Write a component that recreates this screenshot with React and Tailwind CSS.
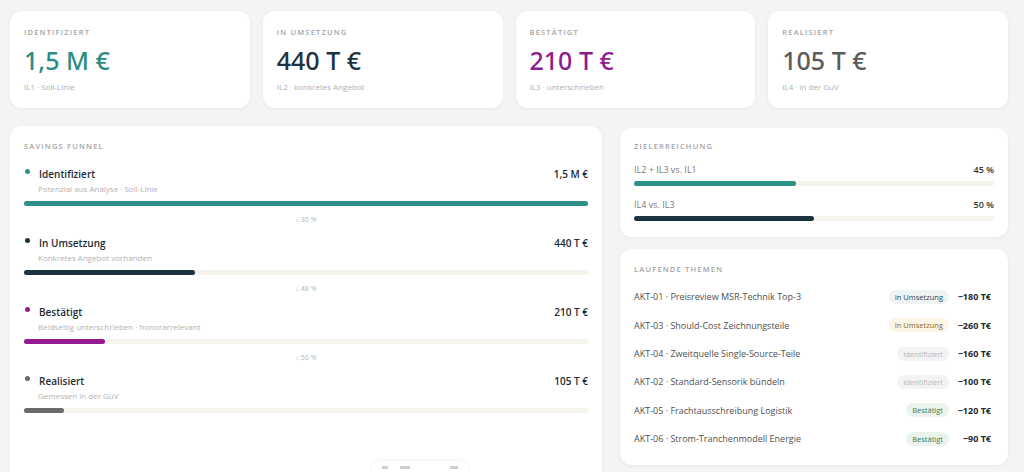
import React from "react";

const kpis = [
  { label: "IDENTIFIZIERT", value: "1,5 M €", sub: "IL1 · Soll-Linie", color: "text-[#2b8c83]" },
  { label: "IN UMSETZUNG", value: "440 T €", sub: "IL2 · konkretes Angebot", color: "text-[#1c3440]" },
  { label: "BESTÄTIGT", value: "210 T €", sub: "IL3 · unterschrieben", color: "text-[#8f1b8f]" },
  { label: "REALISIERT", value: "105 T €", sub: "IL4 · in der GuV", color: "text-[#5b5b5b]" },
];

const stages = [
  { title: "Identifiziert", sub: "Potenzial aus Analyse · Soll-Linie", value: "1,5 M €", dot: "bg-[#2e9188]", bar: "bg-[#2e9188]", pct: 100, drop: "↓ 30 %" },
  { title: "In Umsetzung", sub: "Konkretes Angebot vorhanden", value: "440 T €", dot: "bg-[#1c3440]", bar: "bg-[#1c3440]", pct: 30.3, drop: "↓ 48 %" },
  { title: "Bestätigt", sub: "Beidseitig unterschrieben · honorarrelevant", value: "210 T €", dot: "bg-[#931a93]", bar: "bg-[#931a93]", pct: 14.4, drop: "↓ 50 %" },
  { title: "Realisiert", sub: "Gemessen in der GuV", value: "105 T €", dot: "bg-[#6a6a6a]", bar: "bg-[#6a6a6a]", pct: 7.1 },
];

const themen = [
  { name: "AKT-01 · Preisreview MSR-Technik Top-3", badge: "In Umsetzung", cls: "bg-[#eef3f3] text-[#2f4752]", amount: "−180 T€" },
  { name: "AKT-03 · Should-Cost Zeichnungsteile", badge: "In Umsetzung", cls: "bg-[#fcf5e6] text-[#8a6a2c]", amount: "−260 T€" },
  { name: "AKT-04 · Zweitquelle Single-Source-Teile", badge: "Identifiziert", cls: "bg-[#f3f3f3] text-[#b9b9b9]", amount: "−160 T€" },
  { name: "AKT-02 · Standard-Sensorik bündeln", badge: "Identifiziert", cls: "bg-[#f3f3f3] text-[#b9b9b9]", amount: "−100 T€" },
  { name: "AKT-05 · Frachtausschreibung Logistik", badge: "Bestätigt", cls: "bg-[#eaf4ed] text-[#3d7a57]", amount: "−120 T€" },
  { name: "AKT-06 · Strom-Tranchenmodell Energie", badge: "Bestätigt", cls: "bg-[#eaf4ed] text-[#3d7a57]", amount: "−90 T€" },
];

const SectionLabel = ({ children }) => (
  <div className="text-[7.5px] leading-[10px] tracking-[0.16em] text-[#a3a3a3] font-semibold">{children}</div>
);

const App = () => {
  return (
    <div className="relative h-[472px] overflow-hidden bg-[#f3f5f5] pl-[10px] pr-[16px] pt-[11px] font-['Open_Sans',sans-serif]">
      {/* KPI cards */}
      <div className="grid grid-cols-4 gap-[13px]">
        {kpis.map((k) => (
          <div key={k.label} className="h-[97px] rounded-xl bg-white px-[14px] pt-[16px] shadow-[0_1px_4px_rgba(0,0,0,0.05)]">
            <SectionLabel>{k.label}</SectionLabel>
            <div className={`mt-[7px] font-['Noto_Sans',sans-serif] text-[25px] leading-[32px] font-medium ${k.color}`}>{k.value}</div>
            <div className="mt-[5px] text-[8px] leading-[12px] text-[#b0b0b0]">{k.sub}</div>
          </div>
        ))}
      </div>

      <div className="mt-[18px] grid grid-cols-[592px_1fr] gap-[18px]">
        {/* Savings funnel */}
        <div className="h-[400px] rounded-xl bg-white px-[14px] pt-[15px] shadow-[0_1px_4px_rgba(0,0,0,0.05)]">
          <SectionLabel>SAVINGS FUNNEL</SectionLabel>
          <div className="mt-[16px] flex flex-col">
            {stages.map((s) => (
              <div key={s.title}>
                <div className="flex items-center justify-between">
                  <div className="flex items-center gap-[9px]">
                    <span className={`mb-[5px] ml-[1px] h-[5px] w-[5px] rounded-full ${s.dot}`} />
                    <span className="text-[10px] leading-[14px] font-semibold text-[#1d2b33]">{s.title}</span>
                  </div>
                  <span className="text-[10px] leading-[14px] font-semibold text-[#1d2b33]">{s.value}</span>
                </div>
                <div className="mt-[2px] pl-[14px] text-[8px] leading-[12px] text-[#b2b2b2]">{s.sub}</div>
                <div className="mt-[6px] h-[5px] w-full rounded-full bg-[#f6f2ec]">
                  <div className={`h-full rounded-full ${s.bar}`} style={{ width: `${s.pct}%` }} />
                </div>
                {s.drop && (
                  <div className="mb-[11px] mt-[9px] text-center text-[7px] leading-[10px] text-[#b5b5b5]">{s.drop}</div>
                )}
              </div>
            ))}
          </div>
        </div>

        {/* Right column */}
        <div className="flex flex-col gap-[12px] pt-[2px]">
          <div className="rounded-xl bg-white px-[14px] pb-[16px] pt-[13px] shadow-[0_1px_4px_rgba(0,0,0,0.05)]">
            <SectionLabel>ZIELERREICHUNG</SectionLabel>
            {[
              { label: "IL2 + IL3 vs. IL1", pct: 45, bar: "bg-[#2e9188]" },
              { label: "IL4 vs. IL3", pct: 50, bar: "bg-[#1c3440]" },
            ].map((z) => (
              <div key={z.label} className="mt-[13px]">
                <div className="flex items-center justify-between text-[9px] leading-[12px]">
                  <span className="text-[#7a7a7a]">{z.label}</span>
                  <span className="font-semibold text-[#333]">{z.pct} %</span>
                </div>
                <div className="mt-[5px] h-[5px] w-full rounded-full bg-[#f6f2ec]">
                  <div className={`h-full rounded-full ${z.bar}`} style={{ width: `${z.pct}%` }} />
                </div>
              </div>
            ))}
          </div>

          <div className="rounded-xl bg-white pb-[12px] pl-[14px] pr-[17px] pt-[15px] shadow-[0_1px_4px_rgba(0,0,0,0.05)]">
            <SectionLabel>LAUFENDE THEMEN</SectionLabel>
            <div className="mt-[9px] flex flex-col">
              {themen.map((t) => (
                <div key={t.name} className="flex h-[28.3px] items-center justify-between">
                  <span className="text-[9px] text-[#4f4f4f]">{t.name}</span>
                  <div className="flex items-center gap-[8px]">
                    <span className={`rounded-full px-[6px] py-[2px] text-[7.5px] leading-[10px] ${t.cls}`}>{t.badge}</span>
                    <span className="w-[34px] text-right text-[9px] font-bold text-[#1d2b33]">{t.amount}</span>
                  </div>
                </div>
              ))}
            </div>
          </div>
        </div>
      </div>

      {/* floating toolbar peeking in at the bottom */}
      <div className="absolute left-[372px] top-[461px] flex h-[20px] w-[96px] items-start gap-[12px] rounded-t-md bg-white px-[10px] pt-[5px] shadow-[0_-1px_4px_rgba(0,0,0,0.06)]">
        <span className="h-[3px] w-[6px] bg-[#d0d0d0]" />
        <span className="h-[3px] w-[10px] bg-[#d0d0d0]" />
        <span className="ml-auto h-[3px] w-[8px] bg-[#d0d0d0]" />
      </div>
    </div>
  );
};

export default App;
